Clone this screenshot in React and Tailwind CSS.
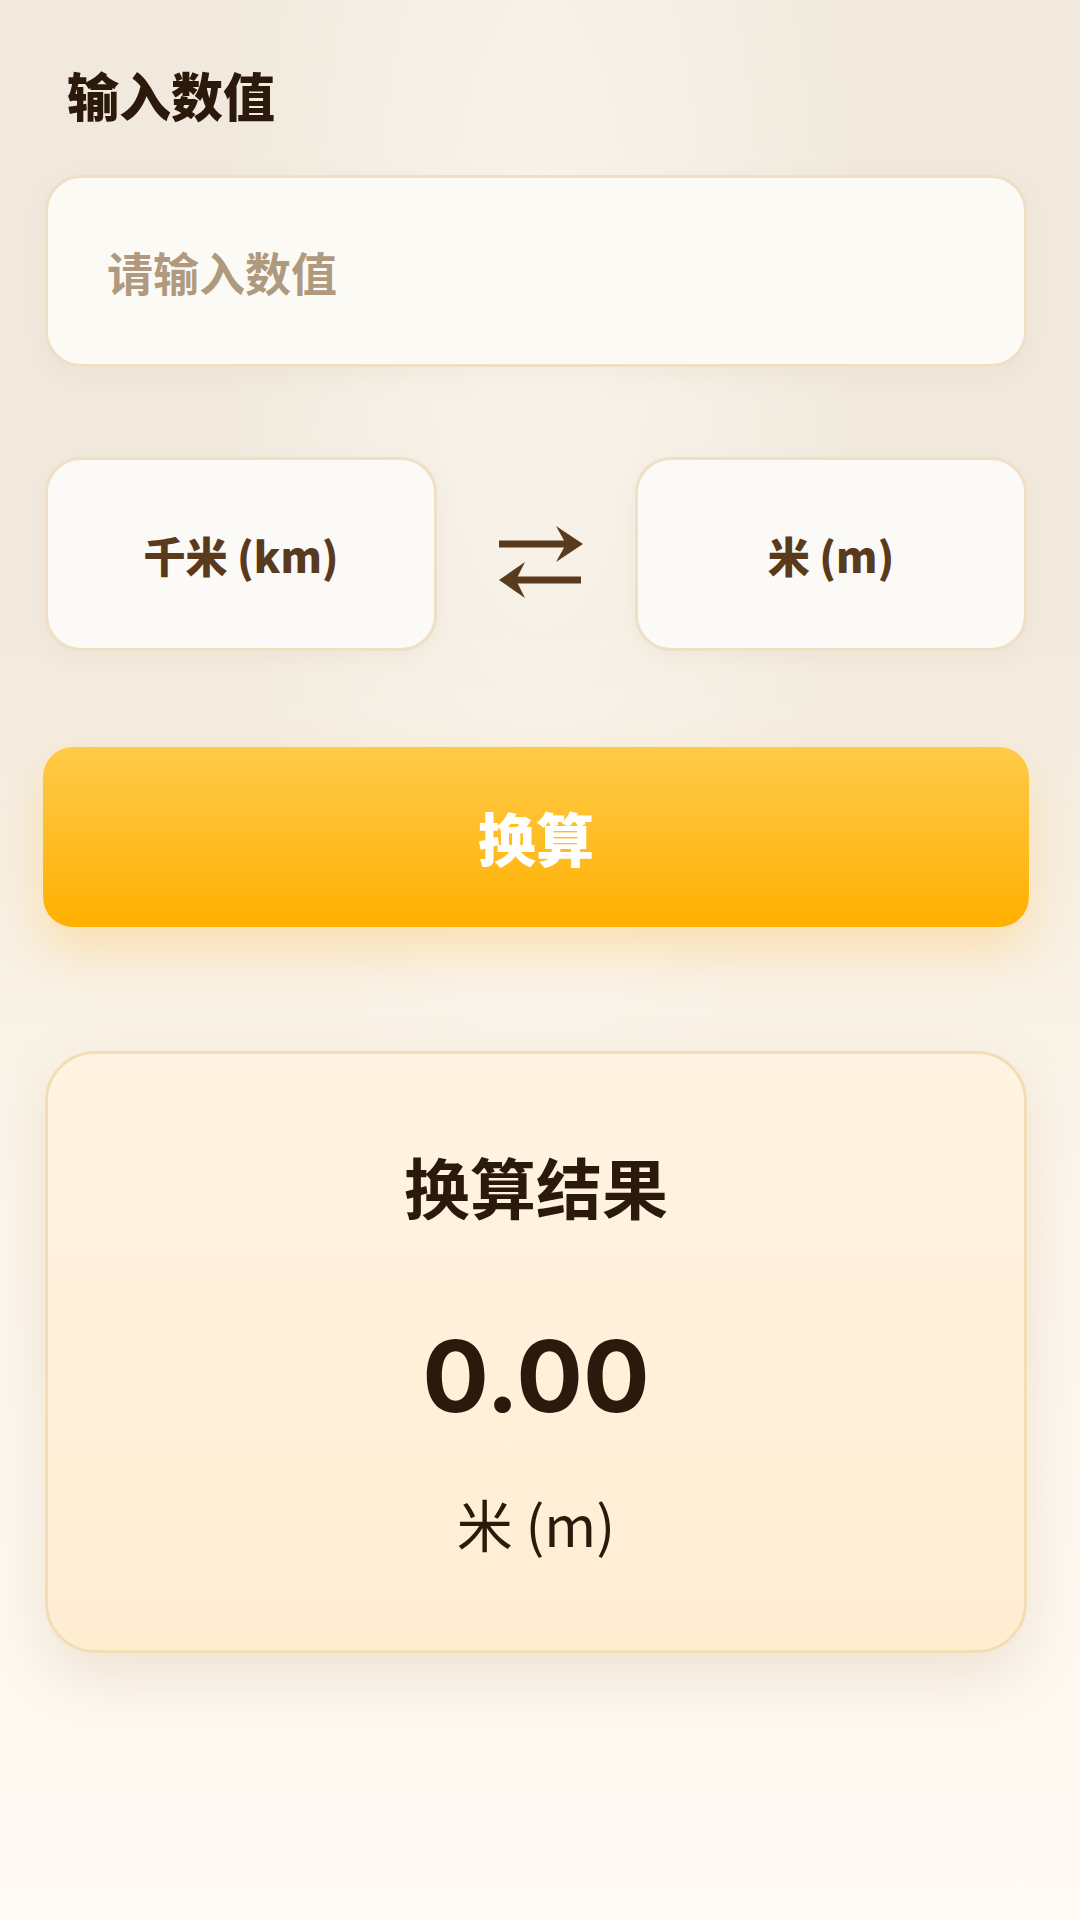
import { useState } from 'react';

const CJK = { fontFamily: '"Noto Sans CJK SC", "Noto Sans", sans-serif' };

function SwapIcon() {
    return (
        <svg viewBox="0 0 86 74" className="h-[74px] w-[86px]" fill="#5a3a1c">
            <rect x="1" y="15.5" width="72" height="7" />
            <path d="M85 19L58 1L68 19L58 37Z" />
            <rect x="13" y="51.5" width="70" height="7" />
            <path d="M1 55L27 37L18 55L27 73Z" />
        </svg>
    );
}

function UnitBox({ label }) {
    return (
        <div className="flex h-[194px] w-[392px] items-center justify-center rounded-[36px] border-[3px] border-[#eedfc6] bg-[#fcfaf6] shadow-[0_6px_20px_rgba(180,150,100,0.08)]">
            <span className="text-[42px] font-extrabold text-[#5a3a1c]">{label}</span>
        </div>
    );
}

export default function App() {
    const [value, setValue] = useState('');

    return (
        <div
            style={CJK}
            className="h-[1920px] w-[1080px] overflow-hidden bg-[radial-gradient(ellipse_at_50%_14%,rgba(255,253,248,0.55)_0%,rgba(255,253,248,0)_42%),linear-gradient(180deg,#f1e9dd_0%,#f2eade_32%,#f8f0e4_48%,#fdf6ec_62%,#fffaf3_100%)] pl-[45px] pr-[53px] pt-[64px]"
        >
            <h1 className="pl-[22px] text-[52px] font-black leading-[1.2] text-[#2b1a0c]">输入数值</h1>

            {/* input */}
            <div className="mt-[49px] flex h-[192px] items-center rounded-[36px] border-[3px] border-[#efdfc6] bg-[#fcfaf5] px-[59px] shadow-[0_8px_24px_rgba(180,150,100,0.08)]">
                <input
                    value={value}
                    onChange={(e) => setValue(e.target.value)}
                    placeholder="请输入数值"
                    className="w-full bg-transparent text-[46px] font-bold text-[#2b1a0c] outline-none placeholder:text-[#b09a7f]"
                />
            </div>

            {/* units */}
            <div className="mt-[90px] flex items-center justify-between">
                <UnitBox label="千米 (km)" />
                <div className="pl-[10px] pt-[16px]">
                    <SwapIcon />
                </div>
                <UnitBox label="米 (m)" />
            </div>

            {/* convert */}
            <button
                type="button"
                className="-ml-[2px] mt-[96px] flex h-[180px] w-[986px] items-center justify-center rounded-[30px] bg-[linear-gradient(180deg,#ffcb47_0%,#ffbf2a_45%,#ffb000_100%)] text-[58px] font-black text-white shadow-[0_24px_50px_rgba(255,180,40,0.28)]"
            >
                换算
            </button>

            {/* result */}
            <div className="mt-[124px] flex h-[602px] flex-col items-center rounded-[50px] border-[3px] border-[#f2ddb5] bg-[linear-gradient(180deg,#fff4e3_0%,#ffedd2_100%)] pt-[92px] shadow-[0_24px_60px_rgba(160,130,90,0.18)]">
                <div className="text-[66px] font-bold leading-[1.2] text-[#2b1a0c]">换算结果</div>
                <div className="mt-[101px] font-['Inter',sans-serif] text-[99px] font-bold leading-none text-[#2b1a0c]">0.00</div>
                <div className="mt-[63px] text-[56px] font-normal leading-[1.2] text-[#2b1a0c]">米 (m)</div>
            </div>
        </div>
    );
}
